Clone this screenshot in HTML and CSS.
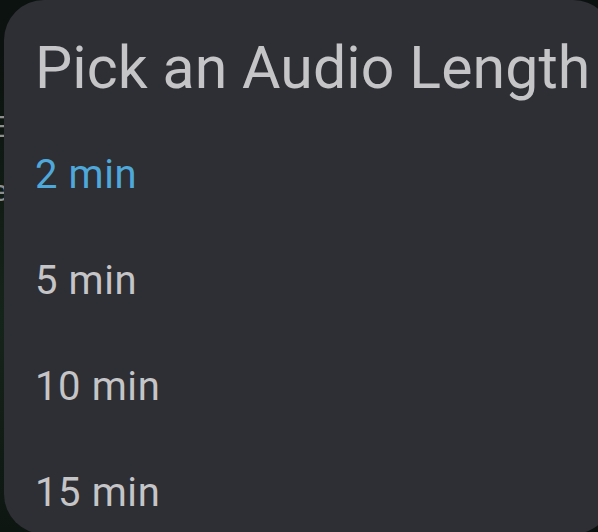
FILE: index.html
```html
<!DOCTYPE html>
<html lang="en">
<head>
  <meta charset="UTF-8" />
  <meta name="viewport" content="width=device-width, initial-scale=1.0" />
  <title>Pick an Audio Length</title>
  <link rel="stylesheet" href="styles.css">
</head>
<body>
  <div class="backdrop">
    <div class="behind behind-top">E</div>
    <div class="behind behind-mid">e</div>
  </div>

  <div class="dialog">
    <h1 class="dialog-title">Pick an Audio Length</h1>
    <ul class="options">
      <li class="option selected">2 min</li>
      <li class="option">5 min</li>
      <li class="option">10 min</li>
      <li class="option">15 min</li>
    </ul>
  </div>
</body>
</html>
```

FILE: styles.css
```css
:root {
  --bg: #0c120f;
  --dialog: #2e2f34;
  --text: #c5c5c8;
  --accent: #4ea9da;
}

body {
  margin: 0;
  width: 598px;
  height: 532px;
  overflow: hidden;
  position: relative;
  background: radial-gradient(circle at 0% 60%, #15241a, var(--bg) 40%);
  font-family: Roboto, "Noto Sans", sans-serif;
}

.backdrop {
  position: absolute;
  inset: 0;
}

.behind {
  position: absolute;
  right: 590px;
  color: #8d8f8e;
  font-size: 30px;
  line-height: 1;
}

.behind-top {
  top: 112px;
}

.behind-mid {
  top: 176px;
}

.dialog {
  position: absolute;
  left: 4px;
  top: 0;
  width: 609px;
  height: 534px;
  box-sizing: border-box;
  background: var(--dialog);
  border-radius: 40px;
  padding: 30px 0 0 31px;
}

.dialog-title {
  margin: 0;
  font-size: 59px;
  font-weight: 400;
  color: var(--text);
  line-height: 76px;
  letter-spacing: 0.1px;
}

.options {
  list-style: none;
  margin: 0;
  padding: 16px 0 0;
}

.option {
  font-size: 40px;
  line-height: 106px;
  letter-spacing: 0.6px;
  color: var(--text);
}

.option.selected {
  color: var(--accent);
}
```
